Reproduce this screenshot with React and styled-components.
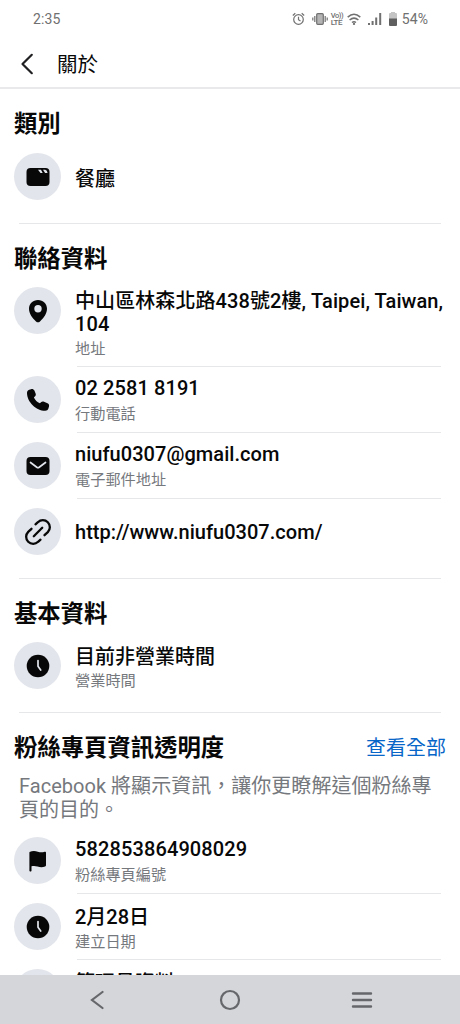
import styled, { createGlobalStyle } from 'styled-components';

const GlobalStyle = createGlobalStyle`
* {
    box-sizing: border-box;
}
body {
    margin: 0;
    background: #fff;
    font-family: Roboto, "Noto Sans CJK TC", sans-serif;
}
`
const Screen = styled.div`
display: flex;
flex-direction: column;
width: 460px;
height: 1024px;
overflow: hidden;
color: #080809;
`
const StatusBar = styled.div`
display: flex;
flex: none;
align-items: center;
justify-content: space-between;
height: 37px;
padding: 0 32px 0 33px;
color: #707070;
font-size: 14px;
letter-spacing: 0.1px;
`
const StatusIcons = styled.div`
display: flex;
align-items: center;
`
const Volte = styled.span`
display: flex;
flex-direction: column;
width: 12px;
margin: 0 4px 0 3px;
font-size: 7.5px;
font-weight: 500;
line-height: 7px;
letter-spacing: -0.4px;
white-space: nowrap;
`
const Lte = styled.span`
font-size: 8px;
letter-spacing: -0.5px;
`
const Vibrate = styled.svg`
margin-left: 7px;
`
const Signal = styled.svg`
margin-left: 7px;
`
const Battery = styled.svg`
margin: 0 5px 0 7px;
`
const Header = styled.header`
display: flex;
flex: none;
align-items: center;
height: 52px;
padding: 3px 0 0 19px;
border-bottom: 2px solid #e9e9eb;
`
const HeaderTitle = styled.h1`
margin: 0 0 0 21px;
padding-top: 3px;
font-size: 20.5px;
font-weight: 400;
line-height: 30px;
`
const Content = styled.main`
flex: 1;
min-height: 0;
overflow: hidden;
`
const Section = styled.section`
padding-bottom: 14px;
`
const SectionHead = styled.div`
display: flex;
align-items: center;
justify-content: space-between;
height: ${({ $tall }) => ($tall ? 54 : 53)}px;
padding: 16px 14px 0 14px;
`
const SectionTitle = styled.h2`
margin: 0;
font-size: 23.35px;
font-weight: 700;
line-height: 30px;
`
const SeeAll = styled.a`
padding-top: 1px;
color: #0866c8;
font-size: 20px;
line-height: 30px;
`
const Description = styled.p`
margin: 0;
padding: 9px 19px 5px;
color: #75787d;
font-size: 20px;
line-height: 23.5px;
letter-spacing: 0.03px;
`
const SectionLine = styled.div`
height: 1px;
margin: 0 19px;
background: #e6e7e9;
`
const RowBox = styled.div`
display: flex;
min-height: 66px;
padding-left: 14px;
`
const Circle = styled.div`
display: flex;
flex: none;
align-items: center;
justify-content: center;
width: 47px;
height: 47px;
margin-top: 10px;
border-radius: 50%;
background: #e2e5eb;
`
const RowBody = styled.div`
display: flex;
flex: 1;
flex-direction: column;
justify-content: ${({ $single }) => ($single ? 'center' : 'flex-start')};
margin-left: 14px;
padding: ${({ $single }) => ($single ? '2px 0 0' : '11px 0 7px')};
`
const RowTitle = styled.div`
padding-top: ${({ $shift }) => $shift || 0}px;
font-size: 20px;
font-weight: 500;
line-height: 23px;
letter-spacing: ${({ $spacing }) => $spacing || 0}px;
`
const RowLabel = styled.div`
margin-top: ${({ $shift }) => ($shift ? 5 - $shift : 4)}px;
color: #75787d;
font-size: 15.2px;
line-height: 20px;
`
const RowLine = styled.div`
height: 1px;
margin: 0 19px -1px 77px;
background: #e6e7e9;
`
const NavBar = styled.nav`
display: flex;
flex: none;
align-items: center;
justify-content: space-between;
height: 49px;
padding: 0 87px 0 90px;
background: #d5d6da;
`
const HomeIcon = styled.svg`
margin-left: 4px;
`

function CategoryIcon() {
    return (
        <svg width="24" height="20" viewBox="0 0 24 20">
            <rect x="0.5" y="1" width="23" height="18" rx="4" fill="#080809" />
            <path d="M12 2.8h3l1.7 3.1h-2.2zM17 2.8h2.2q2 .4 2.4 3.1h-2.5z" fill="#e2e5eb" />
        </svg>
    );
}

function PinIcon() {
    return (
        <svg width="20" height="24" viewBox="0 0 20 24">
            <path fillRule="evenodd" fill="#080809" d="M10 1C4.9 1 1 4.9 1 9.8c0 4.8 3.4 9.4 7 12.6q2 1.7 4 0c3.6-3.2 7-7.8 7-12.6C19 4.9 15.1 1 10 1zM10 6a3.7 3.7 0 1 1 0 7.4A3.7 3.7 0 0 1 10 6z" />
        </svg>
    );
}

function PhoneIcon() {
    return (
        <svg width="24" height="24" viewBox="0 0 24 24">
            <path fill="#080809" d="M3.2 1.8 5 1.2c1.5-.4 2.800.2 3.400 1.400l1.200 2.800c.5 1.100.1 2.300-.8 3.100L7.900 9.400c1.200 2.600 3.200 4.500 6 5.900l1.100-1.100c.8-.8 2-1 3-.5l3.500 1.500c1.300.6 1.900 1.900 1.500 3.200l-.6 2.200c-.5 1.400-1.700 2.200-3.100 2.200C10 22.800 1.200 13.800 1 5.200c-.1-1.500.8-2.900 2.200-3.400z" />
        </svg>
    );
}

function MailIcon() {
    return (
        <svg width="24" height="20" viewBox="0 0 24 20">
            <rect x="0.5" y="1" width="23" height="18" rx="4" fill="#080809" />
            <path d="m4.5 6.5 6.3 4.8q1.2.8 2.4 0l6.3-4.800" fill="none" stroke="#e2e5eb" strokeWidth="1.7" strokeLinecap="round" />
        </svg>
    );
}

function LinkIcon() {
    return (
        <svg width="28" height="28" viewBox="0 0 28 28" fill="none" stroke="#080809" strokeWidth="2.3" strokeLinecap="round">
            <path d="m9.800 18.200 8.400-8.400" />
            <path d="M11.500 6.300 13.900 4.200a6.300 6.300 0 0 1 9.900 9.900L20.500 17.200" />
            <path d="M16.500 21.700 14.100 23.800a6.300 6.300 0 0 1-9.900-9.900L7.500 10.800" />
        </svg>
    );
}

function ClockIcon() {
    return (
        <svg width="24" height="24" viewBox="0 0 24 24">
            <circle cx="12" cy="12" r="11.3" fill="#080809" />
            <path d="M12 6.500v5.800l2.700 3.700" fill="none" stroke="#e2e5eb" strokeWidth="1.7" strokeLinecap="round" strokeLinejoin="round" />
        </svg>
    );
}

function FlagIcon() {
    return (
        <svg width="20" height="22" viewBox="0 0 20 22">
            <path fill="#080809" d="M1.500 2C4.500.6 7.200.8 9.800 1.700c2.400.8 4.500.9 6.800.1.800-.2 1.400.2 1.400 1v12.500c0 .6-.3 1-.9 1.200-2.600.9-5 .8-7.600 0-2.200-.7-4.200-.8-6-.2v4.200c0 .7-.4 1.100-1 1.100s-1.100-.4-1.100-1.100V2.900z" />
        </svg>
    );
}

function Row({ icon, title, label, spacing, shift, line }) {
    return (
        <>
            <RowBox>
                <Circle>{icon}</Circle>
                <RowBody $single={!label}>
                    <RowTitle $spacing={spacing} $shift={shift}>{title}</RowTitle>
                    {label && <RowLabel $shift={shift}>{label}</RowLabel>}
                </RowBody>
            </RowBox>
            {line && <RowLine />}
        </>
    );
}

function Status() {
    return (
        <StatusBar>
            <span>2:35</span>
            <StatusIcons>
                <svg width="13" height="14" viewBox="0 0 13 14" fill="none" stroke="#707070" strokeWidth="1.2">
                    <circle cx="6.5" cy="7.5" r="4.8" />
                    <path d="M6.5 4.700v3l2 1.200M.8 3.500 3.300 1.300M12.200 3.500 9.700 1.300" />
                </svg>
                <Vibrate width="16" height="12" viewBox="0 0 16 12" fill="none" stroke="#707070" strokeWidth="1.2">
                    <rect x="4.7" y=".7" width="6.6" height="10.6" rx="1" fill="#b4b4b4" />
                    <path d="M2.800 3v6M13.200 3v6M.8 4.500v3M15.200 4.500v3" />
                </Vibrate>
                <Volte>
                    <span>Vo))</span>
                    <Lte>LTE</Lte>
                </Volte>
                <svg width="14" height="12" viewBox="0 0 14 12" fill="none" stroke="#707070" strokeWidth="1.5">
                    <path d="M.7 4.100Q7-1.600 13.300 4.100M2.600 7q4.400-3.800 8.800 0M5 9.500q2-1.600 4 0" />
                    <circle cx="7" cy="11" r=".4" />
                </svg>
                <Signal width="14" height="12" viewBox="0 0 14 12" fill="#707070">
                    <path d="M0 10h2v2H0zM3.600 8h2v4h-2zM7.200 4.500h2V12h-2zM11.200 0h2v12h-2z" />
                </Signal>
                <Battery width="8" height="14" viewBox="0 0 8 14">
                    <path d="M2 0h4v1h1q1 0 1 1v5H0V2q0-1 1-1h1z" fill="#c4c4c4" />
                    <path d="M0 6.500h8V13q0 1-1 1H1q-1 0-1-1z" fill="#5f5f5f" />
                </Battery>
                <span>54%</span>
            </StatusIcons>
        </StatusBar>
    );
}

export default function App() {
    return (
        <Screen>
            <GlobalStyle />
            <Status />
            <Header>
                <svg width="17" height="22" viewBox="0 0 17 22" fill="none" stroke="#202022" strokeWidth="2.2" strokeLinecap="round" strokeLinejoin="round">
                    <path d="M12.800 1.800 3.500 11l9.300 9.200" />
                </svg>
                <HeaderTitle>關於</HeaderTitle>
            </Header>
            <Content>
                <Section>
                    <SectionHead $tall>
                        <SectionTitle>類別</SectionTitle>
                    </SectionHead>
                    <Row icon={<CategoryIcon />} title="餐廳" shift={5} />
                </Section>
                <SectionLine />
                <Section>
                    <SectionHead>
                        <SectionTitle>聯絡資料</SectionTitle>
                    </SectionHead>
                    <Row icon={<PinIcon />} title="中山區林森北路438號2樓, Taipei, Taiwan, 104" label="地址" spacing={0.08} shift={2} line />
                    <Row icon={<PhoneIcon />} title="02 2581 8191" label="行動電話" spacing={0.1} line />
                    <Row icon={<MailIcon />} title="niufu0307@gmail.com" label="電子郵件地址" spacing={0.05} line />
                    <Row icon={<LinkIcon />} title="http://www.niufu0307.com/" spacing={0.03} />
                </Section>
                <SectionLine />
                <Section>
                    <SectionHead>
                        <SectionTitle>基本資料</SectionTitle>
                    </SectionHead>
                    <Row icon={<ClockIcon />} title="目前非營業時間" label="營業時間" shift={3} />
                </Section>
                <SectionLine />
                <Section>
                    <SectionHead>
                        <SectionTitle>粉絲專頁資訊透明度</SectionTitle>
                        <SeeAll>查看全部</SeeAll>
                    </SectionHead>
                    <Description>Facebook 將顯示資訊，讓你更瞭解這個粉絲專頁的目的。</Description>
                    <Row icon={<FlagIcon />} title="582853864908029" label="粉絲專頁編號" spacing={0.12} line />
                    <Row icon={<ClockIcon />} title="2月28日" label="建立日期" shift={2} line />
                    <Row icon={<FlagIcon />} title="管理員資料" label="粉絲專頁" shift={2} />
                </Section>
            </Content>
            <NavBar>
                <svg width="14" height="20" viewBox="0 0 14 20" fill="none" stroke="#66676b" strokeWidth="2.2" strokeLinecap="round">
                    <path d="M12.500 2 2 10l10.500 8" />
                </svg>
                <HomeIcon width="22" height="22" viewBox="0 0 22 22" fill="none" stroke="#66676b" strokeWidth="2.2">
                    <circle cx="11" cy="11" r="9" />
                </HomeIcon>
                <svg width="22" height="18" viewBox="0 0 22 18" stroke="#66676b" strokeWidth="2.4" strokeLinecap="round">
                    <path d="M2 2.500h18M2 9h18M2 15.500h18" />
                </svg>
            </NavBar>
        </Screen>
    );
}
